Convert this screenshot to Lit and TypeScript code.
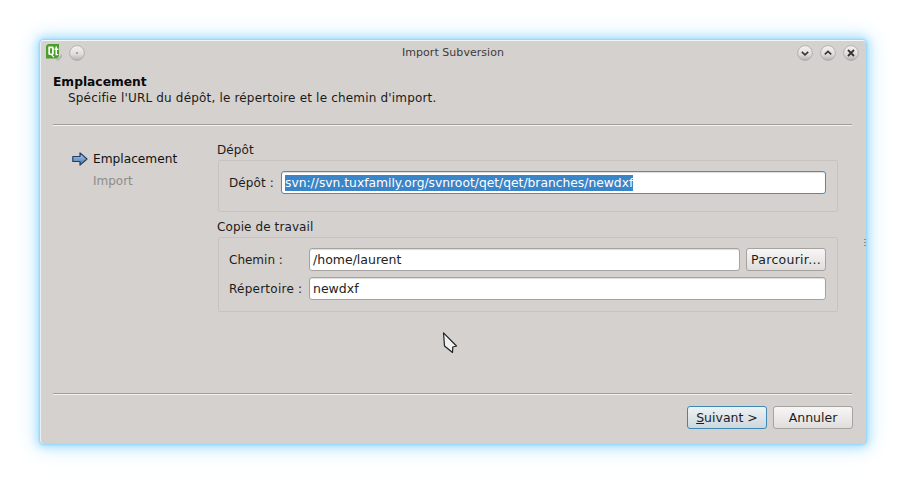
import { LitElement, html, svg, css } from "lit";
import { customElement } from "lit/decorators.js";

@customElement("app-root")
export class AppRoot extends LitElement {
  static styles = css`
    :host { display: block; width: 906px; height: 484px; background: #fff; font-family: "DejaVu Sans", sans-serif; font-size: 12px; color: #111; overflow: hidden; }
    * { box-sizing: border-box; }
    .page { padding: 40px; height: 484px; }
    .win { position: relative; width: 826px; height: 404px; background: #d5d1ce; border-radius: 4px; border-top: 1px solid #f2f7fa; border-left: 1px solid #e8f0f4;
      box-shadow: 0 0 2px 1px #8fd4fb, 0 0 10px 3px #a9defc, 0 0 22px 6px #dcf2fe; display: flex; flex-direction: column; padding: 0 14px 0 12px; }
    .title { height: 21px; margin: 0 -14px 0 -12px; padding: 2px 7px 0 5px; display: flex; align-items: center; }
    .left { width: 61px; flex: none; display: flex; align-items: center; gap: 6px; }
    .title .qt { width: 17px; height: 17px; display: block; }
    .title .name { flex: 1; text-align: center; font-size: 11px; color: #3b3b3b; padding-left: 2px; letter-spacing: 0.05px; }
    .wb { width: 16px; height: 16px; display: block; }
    .wbs { display: flex; gap: 7px; flex: none; }
    .head { height: 62px; padding-top: 13px; }
    .head b { display: block; line-height: 15px; font-size: 12.25px; color: #0a0a0a; }
    .head .sub { display: block; line-height: 15px; margin-top: 1px; padding-left: 15px; font-size: 12px; color: #1a1a1a; letter-spacing: 0.18px; }
    .sep { height: 2px; background: linear-gradient(#a09c98 50%, #f4f3f2 50%); flex: none; }
    .body { flex: 1; display: flex; }
    .steps { width: 164px; padding: 25px 0 0 19px; flex: none; }
    .step { display: flex; align-items: center; height: 16px; gap: 5px; color: #111; font-size: 12.2px; }
    .step.off { color: #8f8c8a; padding-left: 21px; margin-top: 6px; font-size: 12px; }
    .step svg { display: block; }
    .form { flex: 1; padding-top: 16px; }
    .gt { line-height: 16px; height: 16px; color: #1c1c1c; font-size: 12px; letter-spacing: 0.1px; }
    .box { margin: 2px 14px 0 1px; border: 1px solid #c6c3c0; border-radius: 2px; padding: 10px 11px 0 10px; }
    .box.a { height: 52px; margin-bottom: 7px; }
    .box.b { height: 75px; }
    .row { display: flex; align-items: center; height: 23px; color: #1c1c1c; }
    .row + .row { margin-top: 6px; }
    .lab { flex: none; }
    .a .lab { width: 52px; letter-spacing: 0.12px; }
    .b .lab { width: 80px; }
    .lab.wide { letter-spacing: 0.25px; }
    .in { flex: 1; height: 23px; background: #fff; border: 1px solid #a5a2a0; border-radius: 3px; padding-left: 3px; display: flex; align-items: center; color: #222; font-size: 12.5px; box-shadow: inset 0 1px 1px #ddd; white-space: nowrap; }
    .in.focus { border-color: #4a8dbd; }
    .sel { background: #3a84c8; color: #fff; line-height: 16px; height: 16px; font-size: 12.3px; }
    .btn { height: 23px; width: 80px; border: 1px solid #a5a2a0; border-radius: 3px; background: linear-gradient(#f7f6f6, #e0dedc); text-align: center; line-height: 21px; color: #1c1c1c; font-size: 12.5px; flex: none; }
    .row .btn { margin-left: 6px; letter-spacing: 0.28px; }
    .btn.def { border-color: #3f87b4; background: linear-gradient(#eef2f4, #ccd8dd); }
    .foot { display: flex; justify-content: flex-end; gap: 6px; height: 49px; padding-top: 11px; flex: none; margin-right: -1px; }
    .bottomsep { margin-top: auto; }
    .cursor { position: absolute; left: 401px; top: 291px; display: block; }
    .grip { position: absolute; left: 823px; top: 198px; width: 2px; height: 9px; background: repeating-linear-gradient(#8f8c8a 0 1px, transparent 1px 3px); }
  `;

  wb(glyph: unknown, id: string) {
    return html`<svg class="wb" viewBox="0 0 16 16">
      <defs><linearGradient id=${id} x1="0" y1="0" x2="0" y2="1"><stop offset="0" stop-color="#f4f3f2"/><stop offset="0.6" stop-color="#dedcda"/><stop offset="1" stop-color="#b3b0ad"/></linearGradient></defs>
      <circle cx="8" cy="8" r="7.4" fill=${`url(#${id})`} stroke="#a9a6a3" stroke-width="0.8"/>${glyph}</svg>`;
  }

  render() {
    const chev = "fill:none;stroke:#333;stroke-width:1.6";
    return html`<div class="page"><div class="win">
      <div class="title">
        <div class="left">
          <svg class="qt" viewBox="0 0 17 17">
            <path d="M11 15 L16 10 L16 13 L12.5 16.5 L10 16.5 Z" fill="#b5b3b0"/>
            <path d="M0 2 L2 0 H13 V12 L11 14.5 H0 Z" fill="#4a9e2a"/>
            <path d="M2.3 2.6 H6.6 Q7.8 2.6 7.8 4 V9.6 Q7.8 11 6.6 11 H3.5 Q2.3 11 2.3 9.6 Z M4 4.2 V9.4 H6.1 V4.2 Z" fill="#fff" fill-rule="evenodd"/>
            <path d="M6 10.5 L8.6 13 L7.5 13.6 L5 11 Z" fill="#fff"/>
            <path d="M9.5 2.6 H11 V4.6 H12.3 V6 H11 V10 H12.3 V11.2 H9.5 V6 H8.6 V4.6 H9.5 Z" fill="#fff"/>
          </svg>
          ${this.wb(svg`<circle cx="8" cy="8" r="0.8" fill="#555"/>`, "g0")}
        </div>
        <span class="name">Import Subversion</span>
        <span class="wbs">
          ${this.wb(svg`<path d="M4.8 6.8 L8 9.8 L11.2 6.8" style=${chev}/>`, "g1")}
          ${this.wb(svg`<path d="M4.8 9.4 L8 6.4 L11.2 9.4" style=${chev}/>`, "g2")}
          ${this.wb(svg`<path d="M5 5 L11 11 M11 5 L5 11" style="fill:none;stroke:#333;stroke-width:1.8"/>`, "g3")}
        </span>
      </div>
      <div class="head"><b>Emplacement</b><span class="sub">Spécifie l'URL du dépôt, le répertoire et le chemin d'import.</span></div>
      <div class="sep"></div>
      <div class="body">
        <div class="steps">
          <div class="step">
            <svg width="16" height="14" viewBox="0 0 16 14">
              <defs><linearGradient id="ar" x1="0" y1="0" x2="0" y2="1"><stop offset="0" stop-color="#b4cee6"/><stop offset="1" stop-color="#3f74ad"/></linearGradient></defs>
              <path d="M0.8 4.5 H8 V0.9 L15 7 L8 13.1 V9.5 H0.8 Z" fill="url(#ar)" stroke="#1f3f66" stroke-width="1.2" stroke-linejoin="round"/>
            </svg>
            <span>Emplacement</span>
          </div>
          <div class="step off">Import</div>
        </div>
        <div class="form">
          <div class="gt">Dépôt</div>
          <div class="box a">
            <div class="row"><span class="lab">Dépôt :</span><div class="in focus"><span class="sel">svn://svn.tuxfamily.org/svnroot/qet/qet/branches/newdxf</span></div></div>
          </div>
          <div class="gt">Copie de travail</div>
          <div class="box b">
            <div class="row"><span class="lab">Chemin :</span><div class="in">/home/laurent</div><div class="btn">Parcourir...</div></div>
            <div class="row"><span class="lab wide">Répertoire :</span><div class="in">newdxf</div></div>
          </div>
        </div>
      </div>
      <div class="sep bottomsep"></div>
      <div class="foot">
        <div class="btn def"><u>S</u>uivant &gt;</div>
        <div class="btn">Annuler</div>
      </div>
      <svg class="cursor" width="16" height="22" viewBox="0 0 16 22">
        <path d="M1.5 0.8 L14.5 14 L10.8 15 L10.5 20.5 L5 16 L2.5 14 Z" fill="#f0f0f0" stroke="#222" stroke-width="1.2" stroke-linejoin="round"/>
      </svg>
      <div class="grip"></div>
    </div></div>`;
  }
}
